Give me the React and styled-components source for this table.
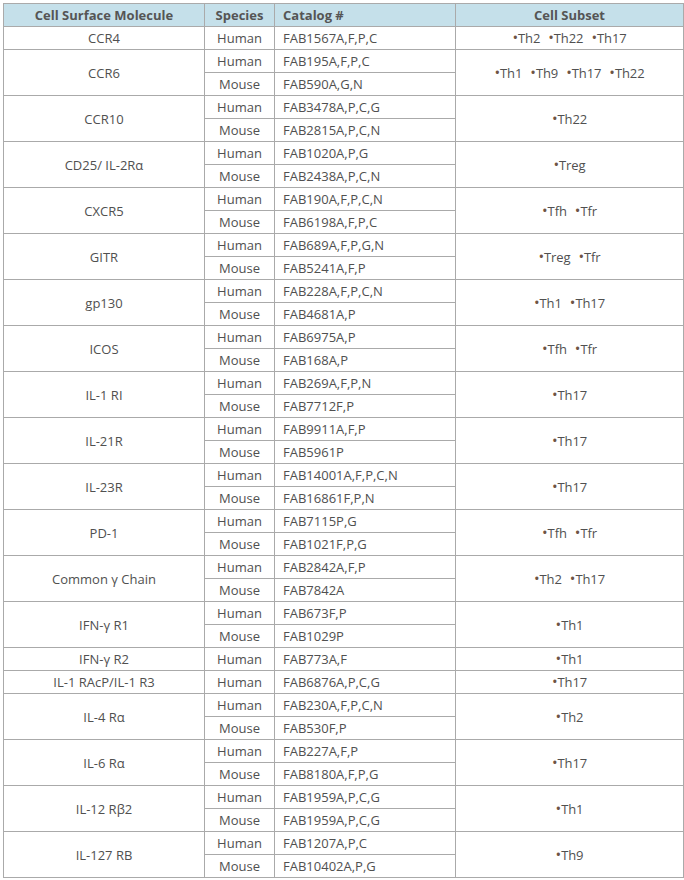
import React from "react";
import styled, { createGlobalStyle } from "styled-components";

const GlobalStyle = createGlobalStyle`
  body {
    margin: 0;
    background: #fff;
    font-family: "Open Sans", "Noto Sans", sans-serif;
  }
`;

const rows = [
  { name: "CCR4", items: [["Human", "FAB1567A,F,P,C"]], subset: ["Th2", "Th22", "Th17"] },
  { name: "CCR6", items: [["Human", "FAB195A,F,P,C"], ["Mouse", "FAB590A,G,N"]], subset: ["Th1", "Th9", "Th17", "Th22"] },
  { name: "CCR10", items: [["Human", "FAB3478A,P,C,G"], ["Mouse", "FAB2815A,P,C,N"]], subset: ["Th22"] },
  { name: "CD25/ IL-2Rα", items: [["Human", "FAB1020A,P,G"], ["Mouse", "FAB2438A,P,C,N"]], subset: ["Treg"] },
  { name: "CXCR5", items: [["Human", "FAB190A,F,P,C,N"], ["Mouse", "FAB6198A,F,P,C"]], subset: ["Tfh", "Tfr"] },
  { name: "GITR", items: [["Human", "FAB689A,F,P,G,N"], ["Mouse", "FAB5241A,F,P"]], subset: ["Treg", "Tfr"] },
  { name: "gp130", items: [["Human", "FAB228A,F,P,C,N"], ["Mouse", "FAB4681A,P"]], subset: ["Th1", "Th17"] },
  { name: "ICOS", items: [["Human", "FAB6975A,P"], ["Mouse", "FAB168A,P"]], subset: ["Tfh", "Tfr"] },
  { name: "IL-1 RI", items: [["Human", "FAB269A,F,P,N"], ["Mouse", "FAB7712F,P"]], subset: ["Th17"] },
  { name: "IL-21R", items: [["Human", "FAB9911A,F,P"], ["Mouse", "FAB5961P"]], subset: ["Th17"] },
  { name: "IL-23R", items: [["Human", "FAB14001A,F,P,C,N"], ["Mouse", "FAB16861F,P,N"]], subset: ["Th17"] },
  { name: "PD-1", items: [["Human", "FAB7115P,G"], ["Mouse", "FAB1021F,P,G"]], subset: ["Tfh", "Tfr"] },
  { name: "Common γ Chain", items: [["Human", "FAB2842A,F,P"], ["Mouse", "FAB7842A"]], subset: ["Th2", "Th17"] },
  { name: "IFN-γ R1", items: [["Human", "FAB673F,P"], ["Mouse", "FAB1029P"]], subset: ["Th1"] },
  { name: "IFN-γ R2", items: [["Human", "FAB773A,F"]], subset: ["Th1"] },
  { name: "IL-1 RAcP/IL-1 R3", items: [["Human", "FAB6876A,P,C,G"]], subset: ["Th17"] },
  { name: "IL-4 Rα", items: [["Human", "FAB230A,F,P,C,N"], ["Mouse", "FAB530F,P"]], subset: ["Th2"] },
  { name: "IL-6 Rα", items: [["Human", "FAB227A,F,P"], ["Mouse", "FAB8180A,F,P,G"]], subset: ["Th17"] },
  { name: "IL-12 Rβ2", items: [["Human", "FAB1959A,P,C,G"], ["Mouse", "FAB1959A,P,C,G"]], subset: ["Th1"] },
  { name: "IL-127 RB", items: [["Human", "FAB1207A,P,C"], ["Mouse", "FAB10402A,P,G"]], subset: ["Th9"] },
];

const Wrap = styled.div`
  padding: 3px 0 0 3px;
`;

const Table = styled.table`
  border-collapse: collapse;
  width: 681px;
  table-layout: fixed;
  font-size: 13px;
  color: #505050;
`;

const Head = styled.th`
  height: 22px;
  padding: 0 ${(p) => (p.$left ? "8px" : "0")};
  background: #c5e0ea;
  border: 1px solid #aaa;
  font-weight: bold;
  color: #555;
  text-align: ${(p) => (p.$left ? "left" : "center")};
`;

const Cell = styled.td`
  height: 22px;
  padding: 0 ${(p) => (p.$left ? "8px" : "0")};
  border: 1px solid #aaa;
  text-align: ${(p) => (p.$left ? "left" : "center")};
  vertical-align: middle;
  white-space: nowrap;
  line-height: 18px;
`;

const Subset = styled.span`
  margin: 0 4px;
  letter-spacing: -0.1px;
`;

const Dot = styled.span`
  color: #6e5444;
  font-size: 15px;
  line-height: 1;
`;

export default function App() {
  return (
    <Wrap>
      <GlobalStyle />
      <Table>
        <colgroup>
          <col style={{ width: 201 }} />
          <col style={{ width: 70 }} />
          <col style={{ width: 181 }} />
          <col style={{ width: 228 }} />
        </colgroup>
        <thead>
          <tr>
            <Head>Cell Surface Molecule</Head>
            <Head>Species</Head>
            <Head $left>Catalog #</Head>
            <Head>Cell Subset</Head>
          </tr>
        </thead>
        <tbody>
          {rows.map((r) =>
            r.items.map(([sp, cat], i) => (
              <tr key={r.name + i}>
                {i === 0 && <Cell rowSpan={r.items.length}>{r.name}</Cell>}
                <Cell>{sp}</Cell>
                <Cell $left>{cat}</Cell>
                {i === 0 && (
                  <Cell rowSpan={r.items.length}>
                    {r.subset.map((s) => (
                      <Subset key={s}>
                        <Dot>•</Dot>
                        {s}
                      </Subset>
                    ))}
                  </Cell>
                )}
              </tr>
            ))
          )}
        </tbody>
      </Table>
    </Wrap>
  );
}
